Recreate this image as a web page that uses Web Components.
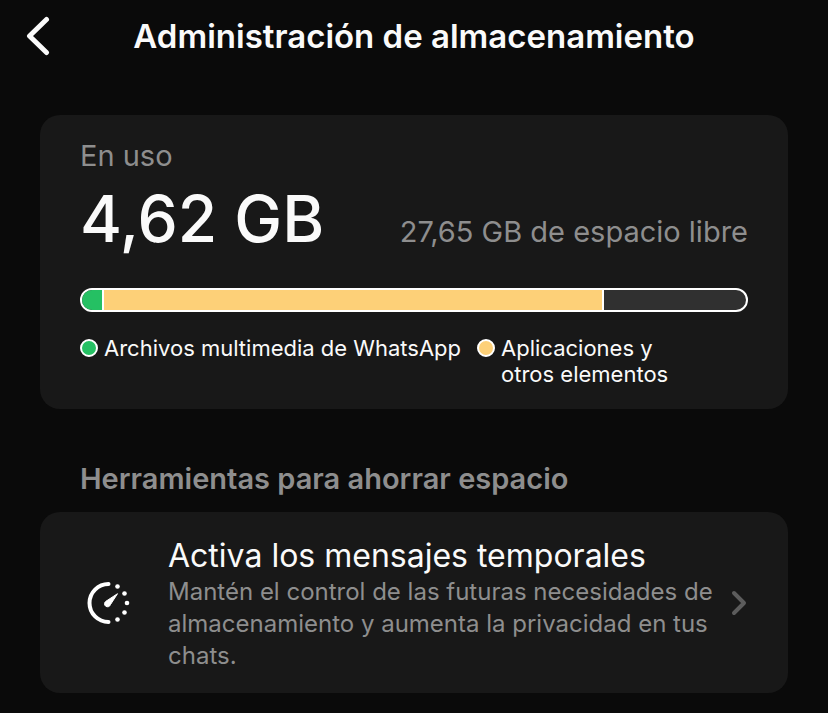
<!DOCTYPE html>
<html lang="es">
<head>
<meta charset="utf-8">
<meta name="viewport" content="width=device-width, initial-scale=1">
<title>Administración de almacenamiento</title>
<style>
body{
  margin: 0;
  background: #0a0a0a;
  color: #fafafa;
  font-family: Inter, "Liberation Sans", sans-serif;
}
main{
  padding: 0 40px 20px;
}
</style>
</head>
<body>
<nav-header>Administración de almacenamiento</nav-header>
<main>
  <storage-card used="4,62 GB" free="27,65 GB de espacio libre">
    <usage-bar slot="bar" media="20" apps="498" rest="142"></usage-bar>
    <legend-item slot="legend" style="--dot: #25c063; flex: none">Archivos multimedia de WhatsApp</legend-item>
    <legend-item slot="legend" style="--dot: #fdd078">Aplicaciones y otros elementos</legend-item>
  </storage-card>
  <tool-section>
    <span slot="title">Herramientas para ahorrar espacio</span>
    <tool-row>
      <span slot="title">Activa los mensajes temporales</span>
      Mantén el control de las futuras necesidades de almacenamiento y aumenta la privacidad en tus chats.
    </tool-row>
  </tool-section>
</main>

<template id="nav-header">
<style>
:host{
  display: block;
}
header{
  display: grid;
  grid-template-columns: 1fr auto 1fr;
  align-items: center;
  height: 72px;
  padding: 0 24px;
}
button{
  display: flex;
  justify-self: start;
  padding: 0;
  border: 0;
  background: none;
  color: inherit;
}
h1{
  margin: 0;
  font-size: 33px;
  line-height: 40px;
  font-weight: 600;
}
</style>
<header>
  <button type="button" aria-label="Atrás">
    <svg width="28" height="40" viewBox="0 0 28 40" fill="none" stroke="currentColor" stroke-width="5" stroke-linecap="round" stroke-linejoin="round"><path d="M22.500 3.500L5.500 20L22.500 36.500"/></svg>
  </button>
  <h1><slot></slot></h1>
</header>
</template>

<template id="storage-card">
<style>
:host{
  display: block;
  margin-top: 43px;
  padding: 25px 40px 22px;
  border-radius: 20px;
  background: #181818;
}
p{
  margin: 0;
}
.muted{
  color: #8e8e8e;
  font-size: 29px;
  line-height: 32px;
}
.totals{
  display: flex;
  justify-content: space-between;
  align-items: baseline;
  margin-bottom: 22px;
}
.used{
  font-size: 64px;
  line-height: 94px;
  font-weight: 500;
}
.legend{
  display: flex;
  gap: 16px;
  margin-top: 23px;
}
</style>
<p class="muted">En uso</p>
<div class="totals">
  <p class="used" id="used"></p>
  <p class="muted" id="free"></p>
</div>
<slot name="bar"></slot>
<div class="legend"><slot name="legend"></slot></div>
</template>

<template id="usage-bar">
<style>
:host{
  display: flex;
  box-sizing: border-box;
  height: 24px;
  border: 2px solid #fff;
  border-radius: 12px;
  background: #303030;
  overflow: hidden;
}
div{
  box-sizing: border-box;
  flex-basis: 0;
}
#media{
  background: #25c063;
  border-right: 2px solid #fff;
}
#apps{
  background: #fdd078;
  border-right: 2px solid #fff;
}
</style>
<div id="media"></div>
<div id="apps"></div>
<div id="rest"></div>
</template>

<template id="legend-item">
<style>
:host{
  display: flex;
  gap: 6px;
  font-size: 22px;
  line-height: 26px;
  text-wrap: balance;
}
i{
  box-sizing: border-box;
  flex: none;
  width: 18px;
  height: 18px;
  margin-top: 4px;
  border: 2px solid #fff;
  border-radius: 50%;
  background: var(--dot);
}
</style>
<i></i>
<span><slot></slot></span>
</template>

<template id="tool-section">
<style>
:host{
  display: block;
  margin-top: 50px;
}
h2{
  margin: 0 40px 13px;
  color: #8e8e8e;
  font-size: 29px;
  line-height: 40px;
  font-weight: 600;
}
</style>
<h2><slot name="title"></slot></h2>
<slot></slot>
</template>

<template id="tool-row">
<style>
:host{
  display: block;
}
a{
  display: flex;
  align-items: center;
  padding: 24px 40px 21px;
  border-radius: 20px;
  background: #181818;
  color: inherit;
  text-decoration: none;
}
svg{
  flex: none;
}
.text{
  flex: 1;
  margin: 0 16px 0 32px;
}
h3, p{
  margin: 0;
  line-height: 32px;
}
h3{
  font-size: 32px;
  line-height: 40px;
  font-weight: 400;
}
p{
  color: #8e8e8e;
  font-size: 24px;
}
</style>
<a href="#">
  <svg width="56" height="56" viewBox="0 1 56 56" fill="none">
    <path d="M28.500 9A19 19 0 0 0 28.500 47" stroke="#fff" stroke-width="4" stroke-linecap="round"/>
    <path d="M37.500 18.700L30.400 29.700A3 3 0 1 1 25.900 26.300Z" fill="#fff" stroke="#fff" stroke-linejoin="round"/>
    <g fill="#fff">
      <circle cx="37.500" cy="11.500" r="2.300"/>
      <circle cx="44.500" cy="18.500" r="2.300"/>
      <circle cx="47" cy="28" r="2.300"/>
      <circle cx="44.500" cy="37.500" r="2.300"/>
      <circle cx="37.500" cy="44.500" r="2.300"/>
    </g>
  </svg>
  <div class="text">
    <h3><slot name="title"></slot></h3>
    <p><slot></slot></p>
  </div>
  <svg width="18" height="28" viewBox="0 1 18 28" fill="none" stroke="#5c5c5c" stroke-width="4" stroke-linecap="round" stroke-linejoin="round"><path d="M4 4L14 14L4 24"/></svg>
</a>
</template>

<script>
class BaseElement extends HTMLElement{
  constructor(){
    super();
    this.attachShadow({mode: "open"});
    const template = document.getElementById(this.localName);
    this.shadowRoot.appendChild(template.content.cloneNode(true));
  }
}

class NavHeader extends BaseElement{}
class LegendItem extends BaseElement{}
class ToolSection extends BaseElement{}
class ToolRow extends BaseElement{}

class StorageCard extends BaseElement{
  connectedCallback(){
    for(const id of ["used", "free"]){
      this.shadowRoot.getElementById(id).textContent = this.getAttribute(id);
    }
  }
}

// each attribute is the share of the bar that its segment takes
class UsageBar extends BaseElement{
  connectedCallback(){
    for(const id of ["media", "apps", "rest"]){
      this.shadowRoot.getElementById(id).style.flexGrow = this.getAttribute(id);
    }
  }
}

customElements.define("nav-header", NavHeader);
customElements.define("usage-bar", UsageBar);
customElements.define("legend-item", LegendItem);
customElements.define("storage-card", StorageCard);
customElements.define("tool-row", ToolRow);
customElements.define("tool-section", ToolSection);
</script>
</body>
</html>
